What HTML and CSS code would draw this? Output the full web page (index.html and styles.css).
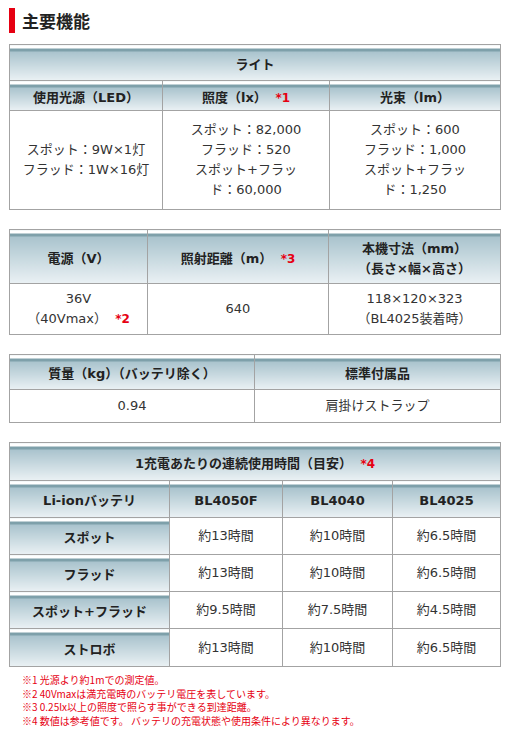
FILE: index.html
```html
<!DOCTYPE html>
<html lang="ja">
<head>
<meta charset="utf-8">
<title>主要機能</title>
<link rel="stylesheet" href="styles.css">
</head>
<body>
<div class="page">
  <h2 class="title">主要機能</h2>

  <table class="spec t1">
    <colgroup><col class="c153"><col class="c167"><col></colgroup>
    <tr class="h36"><th colspan="3">ライト</th></tr>
    <tr class="h30"><th>使用光源（LED）</th><th>照度（lx） <span class="note">*1</span></th><th>光束（lm）</th></tr>
    <tr class="h99">
      <td>スポット：9W×1灯<br>フラッド：1W×16灯</td>
      <td>スポット：82,000<br>フラッド：520<br>スポット+フラッ<br>ド：60,000</td>
      <td>スポット：600<br>フラッド：1,000<br>スポット+フラッ<br>ド：1,250</td>
    </tr>
  </table>

  <table class="spec t2">
    <colgroup><col class="c138"><col class="c181"><col></colgroup>
    <tr class="h54"><th>電源（V）</th><th>照射距離（m） <span class="note">*3</span></th><th>本機寸法（mm）<br>（長さ×幅×高さ）</th></tr>
    <tr class="h51">
      <td>36V<br>（40Vmax） <span class="note">*2</span></td>
      <td>640</td>
      <td>118×120×323<br>（BL4025装着時）</td>
    </tr>
  </table>

  <table class="spec t3">
    <colgroup><col class="c245"><col></colgroup>
    <tr class="h35"><th>質量（kg）（バッテリ除く）</th><th>標準付属品</th></tr>
    <tr class="h33"><td>0.94</td><td>肩掛けストラップ</td></tr>
  </table>

  <table class="spec t4">
    <colgroup><col class="c160"><col class="c113"><col class="c110"><col></colgroup>
    <tr class="h38"><th colspan="4">1充電あたりの連続使用時間（目安） <span class="note">*4</span></th></tr>
    <tr class="h37"><th>Li-ionバッテリ</th><th>BL4050F</th><th>BL4040</th><th>BL4025</th></tr>
    <tr class="h37"><th>スポット</th><td>約13時間</td><td>約10時間</td><td>約6.5時間</td></tr>
    <tr class="h37"><th>フラッド</th><td>約13時間</td><td>約10時間</td><td>約6.5時間</td></tr>
    <tr class="h37"><th>スポット+フラッド</th><td>約9.5時間</td><td>約7.5時間</td><td>約4.5時間</td></tr>
    <tr class="h38"><th>ストロボ</th><td>約13時間</td><td>約10時間</td><td>約6.5時間</td></tr>
  </table>

  <ul class="notes">
    <li>※1 光源より約1mでの測定値。</li>
    <li>※2 40Vmaxは満充電時のバッテリ電圧を表しています。</li>
    <li>※3 0.25lx以上の照度で照らす事ができる到達距離。</li>
    <li>※4 数値は参考値です。 バッテリの充電状態や使用条件により異なります。</li>
  </ul>
</div>
</body>
</html>
```

FILE: styles.css
```css
html, body {
  margin: 0;
  padding: 0;
  background: #fff;
}
body {
  font-family: "DejaVu Sans", "Noto Sans CJK JP", sans-serif;
  font-size: 13px;
  color: #333;
}
.page {
  padding: 8px 9px 0 9px;
}
.title {
  margin: 0 0 11px 0;
  height: 25px;
  border-left: 6px solid #e60012;
  padding-left: 7px;
  font-family: "Noto Sans CJK JP", sans-serif;
  font-size: 17px;
  font-weight: bold;
  line-height: 25px;
  color: #222;
}
.spec {
  width: 492px;
  border-collapse: collapse;
  table-layout: fixed;
  margin: 0 0 19px 0;
}
.spec th, .spec td {
  border: 1px solid #a3a3a3;
  text-align: center;
  vertical-align: middle;
  padding: 0;
  line-height: 20px;
}
.spec th {
  font-weight: bold;
  color: #222;
  padding-top: 4px;
  background: linear-gradient(to bottom, #fff 0, #fff 3px, #7ea0aa 3px, #7ea0aa 6px, #a9c3cd 6px, #eaf1f4 100%);
}
.spec td {
  color: #333;
  background: #fff;
}
.note {
  color: #e60012;
  font-weight: bold;
  font-size: 12px;
  vertical-align: top;
  margin-left: 4px;
}
.t4 {
  margin-bottom: 6px;
}
.c153 { width: 153px; }
.c167 { width: 167px; }
.c138 { width: 138px; }
.c181 { width: 181px; }
.c245 { width: 245px; }
.c160 { width: 160px; }
.c113 { width: 113px; }
.c110 { width: 110px; }
.h30 { height: 30px; }
.h33 { height: 33px; }
.h35 { height: 35px; }
.h36 { height: 36px; }
.h37 { height: 37px; }
.h38 { height: 38px; }
.h51 { height: 51px; }
.h54 { height: 54px; }
.h99 { height: 99px; }
.notes {
  list-style: none;
  margin: 0;
  padding: 0 0 0 13px;
  color: #e60012;
  font-family: "Noto Sans CJK JP", sans-serif;
  font-size: 10px;
  line-height: 13.5px;
}
```
